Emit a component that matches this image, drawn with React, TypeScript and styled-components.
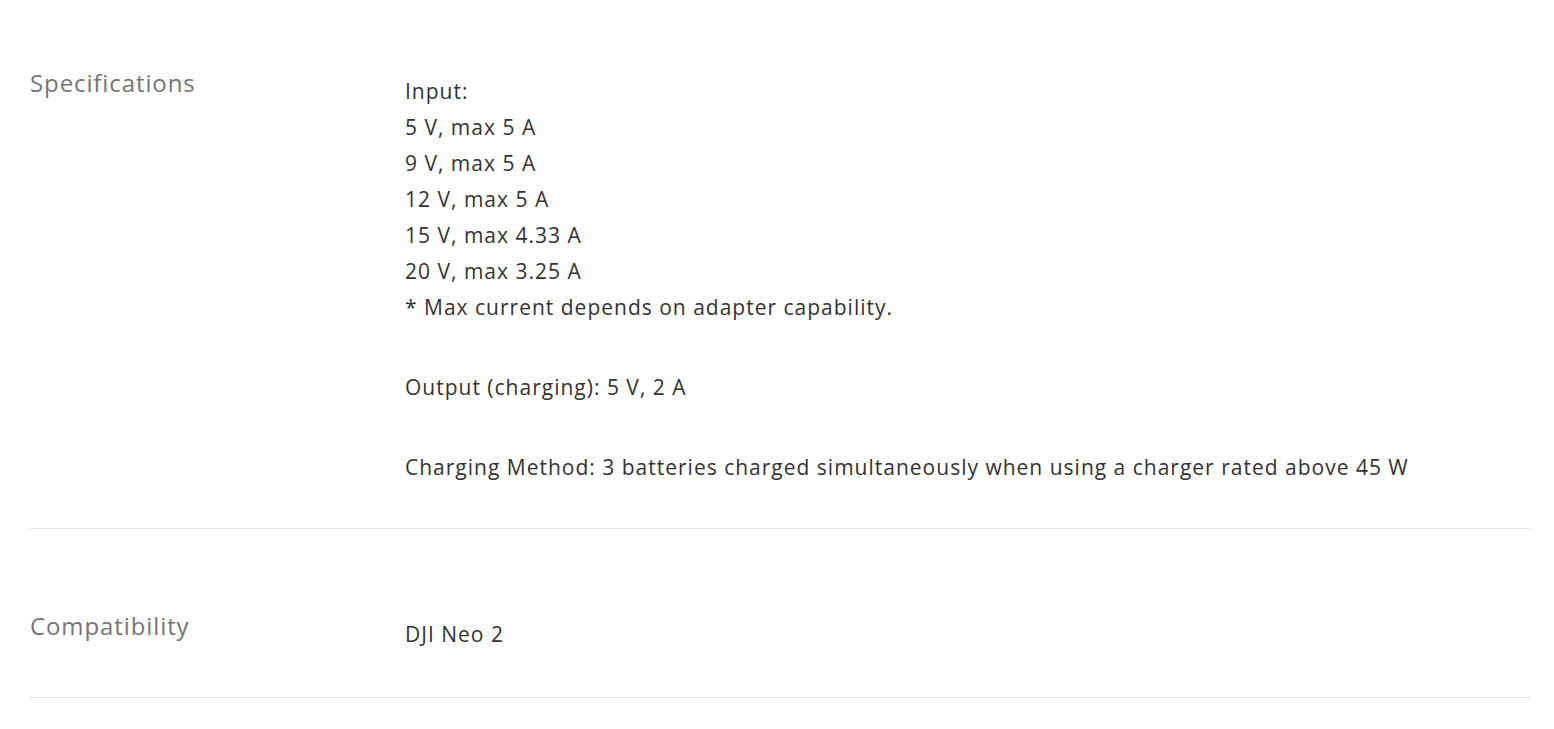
import React from 'react';
import styled, { createGlobalStyle } from 'styled-components';

const GlobalStyle = createGlobalStyle`
  body {
    margin: 0;
    background: #fff;
    font-family: "Open Sans", "Liberation Sans", sans-serif;
  }
`;

const specs = [
  {
    title: 'Specifications',
    blocks: [
      [
        'Input:',
        '5 V, max 5 A',
        '9 V, max 5 A',
        '12 V, max 5 A',
        '15 V, max 4.33 A',
        '20 V, max 3.25 A',
        '* Max current depends on adapter capability.',
      ],
      ['Output (charging): 5 V, 2 A'],
      ['Charging Method: 3 batteries charged simultaneously when using a charger rated above 45 W'],
    ],
  },
  {
    title: 'Compatibility',
    blocks: [['DJI Neo 2']],
  },
];

const App: React.FC = () => {
  return (
    <>
      <GlobalStyle />
      <Table>
        {specs.map((spec, i) => (
          <SpecRow key={spec.title} $first={i === 0}>
            <Label>{spec.title}</Label>
            <Value>
              {spec.blocks.map((lines, j) => (
                <Paragraph key={j}>
                  {lines.map((line, k) => (
                    <React.Fragment key={k}>
                      {line}
                      {k < lines.length - 1 && <br />}
                    </React.Fragment>
                  ))}
                </Paragraph>
              ))}
            </Value>
          </SpecRow>
        ))}
      </Table>
    </>
  );
};

const Table = styled.div`
  width: 1500px;
  margin: 0 0 0 30px;
`;

const SpecRow = styled.div<{ $first: boolean }>`
  display: grid;
  grid-template-columns: 375px 1fr;
  padding: ${(p) => (p.$first ? '65px 0 43px' : '79px 0 45px')};
  border-bottom: 1px solid #e5e5e5;
`;

const Label = styled.div`
  font-size: 24px;
  line-height: 36px;
  letter-spacing: 0.9px;
  color: #757575;
`;

const Value = styled.div`
  padding-top: 8px;
  font-size: 21px;
  line-height: 36px;
  letter-spacing: 1px;
  color: #333;
`;

const Paragraph = styled.p`
  margin: 0 0 44px;

  &:last-child {
    margin-bottom: 0;
  }
`;

export default App;
